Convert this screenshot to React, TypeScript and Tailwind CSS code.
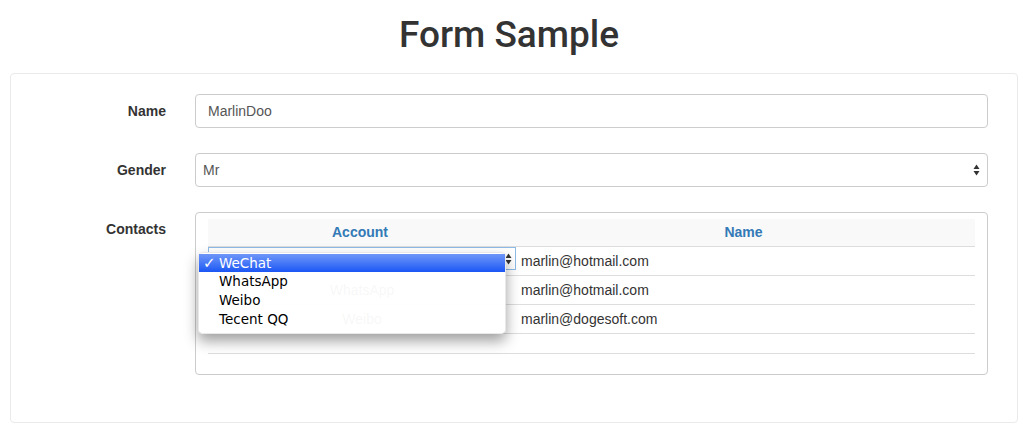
import React from 'react';

const Arrows: React.FC<{ className?: string }> = ({ className }) => (
  <svg width="7" height="12" viewBox="0 0 7 12" className={className}>
    <path d="M3.5 0.5 L6.5 5 L0.5 5 Z" fill="#333" />
    <path d="M3.5 11.5 L6.5 7 L0.5 7 Z" fill="#333" />
  </svg>
);

const contacts = [
  { account: 'WeChat', name: 'marlin@hotmail.com' },
  { account: 'WhatsApp', name: 'marlin@hotmail.com' },
  { account: 'Weibo', name: 'marlin@dogesoft.com' },
];

const options = ['WeChat', 'WhatsApp', 'Weibo', 'Tecent QQ'];

const App: React.FC = () => {
  return (
    <div className="w-[1028px] h-[443px] bg-white text-[#333] font-['Liberation_Sans',Arial,sans-serif] overflow-hidden">
      {/* Title */}
      <h1 className="pt-[15px] mb-[18px] pr-[10px] text-center text-[37px] leading-[40px] font-medium text-[#333] font-['Roboto',sans-serif]">
        Form Sample
      </h1>

      {/* Panel */}
      <div className="mx-[10px] border border-[#eaeaea] rounded-[4px] pt-[20px] pb-[47px] pr-[29px] flex flex-col gap-[25px]">
        {/* Name */}
        <div className="flex">
          <label className="w-[155px] shrink-0 text-right pt-[7px] text-[14px] leading-[20px] font-bold">Name</label>
          <div className="ml-[29px] flex-1 h-[34px] border border-[#ccc] rounded-[4px] pl-[12px] flex items-center text-[14px] text-[#555]">
            MarlinDoo
          </div>
        </div>

        {/* Gender */}
        <div className="flex">
          <label className="w-[155px] shrink-0 text-right pt-[7px] text-[14px] leading-[20px] font-bold">Gender</label>
          <div className="ml-[29px] flex-1 h-[34px] border border-[#ccc] rounded-[4px] pl-[7px] pr-[7px] flex items-center justify-between text-[14px] text-[#555]">
            <span>Mr</span>
            <Arrows />
          </div>
        </div>

        {/* Contacts */}
        <div className="flex">
          <label className="w-[155px] shrink-0 text-right pt-[7px] text-[14px] leading-[20px] font-bold">Contacts</label>
          <div className="ml-[29px] flex-1 border border-[#ccc] rounded-[4px] px-[12px] pt-[6px] pb-[20px]">
            <div className="relative">
              <div className="flex bg-[#f9f9f9] h-[28px] border-b border-[#ddd] text-[14px] font-bold text-[#337ab7]">
                <div className="w-[308px] pr-[4px] flex items-center justify-center">Account</div>
                <div className="flex-1 pr-[4px] flex items-center justify-center">Name</div>
              </div>
              {contacts.map((c, i) => (
                <div key={i} className="flex h-[29px] border-b border-[#ddd] text-[14px] text-[#333]">
                  {i === 0 ? (
                    <div className="w-[308px] h-[23px] border border-[#8dbbe6] flex items-center justify-end pr-[3px]">
                      <Arrows />
                    </div>
                  ) : (
                    <div className="w-[308px] flex items-center justify-center">{c.account}</div>
                  )}
                  <div className="flex-1 pl-[5px] flex items-center">{c.name}</div>
                </div>
              ))}
              <div className="h-[20px] border-b border-[#ddd]" />

              {/* Open select menu */}
              <div className="absolute left-[-10px] top-[33px] w-[308px] bg-white/[0.96] rounded-[5px] pt-[1px] pb-[4px] shadow-[0_7px_14px_rgba(0,0,0,0.38)] border border-[#d8d8d8]/60 font-['DejaVu_Sans',sans-serif] text-[13.5px] text-black">
                {options.map((o, i) => (
                  <div
                    key={o}
                    className={
                      i === 0
                        ? 'h-[18px] flex items-center bg-gradient-to-b from-[#6f96f8] to-[#1a55f4] text-white'
                        : 'h-[19px] flex items-center'
                    }
                  >
                    <span className="w-[20px] pl-[4px] text-[15px] font-bold leading-none">{i === 0 ? '✓' : ''}</span>
                    <span>{o}</span>
                  </div>
                ))}
              </div>
            </div>
          </div>
        </div>
      </div>
    </div>
  );
};

export default App;
